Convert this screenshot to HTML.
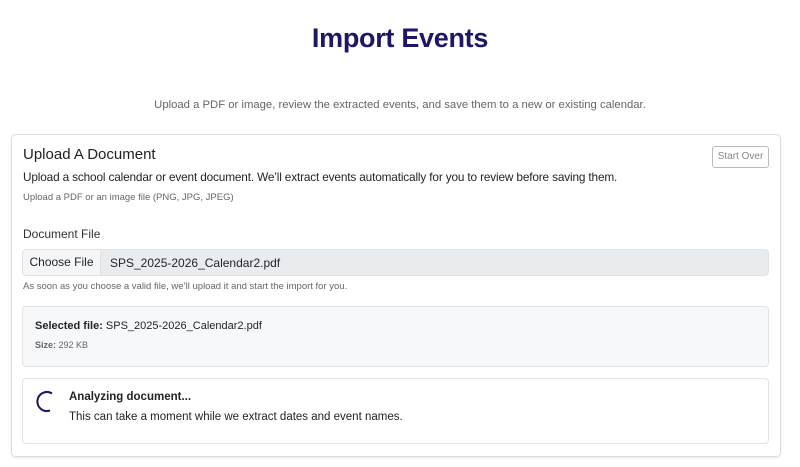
<!DOCTYPE html>
<html><head><style>
*{margin:0;padding:0;box-sizing:border-box}
body{width:800px;height:467px;background:#fff;font-family:"Liberation Sans",Arial,sans-serif;color:#212529;position:relative;overflow:hidden}
.a{position:absolute;white-space:nowrap}
h1{position:absolute;left:0;width:800px;top:23px;text-align:center;font-size:27px;font-weight:bold;color:#1c1766;letter-spacing:-0.3px}
.card{position:absolute;left:11px;top:134px;width:770px;height:323px;border:1px solid #dcdcdc;border-radius:5px;box-shadow:0 1px 2px rgba(0,0,0,.08)}
.btn{position:absolute;left:712px;top:146px;width:57px;height:22px;border:1px solid #bbb;border-radius:3px;font-size:10px;color:#888;text-align:center;line-height:20px}
.file{position:absolute;left:22px;top:249px;width:747px;height:27px;border:1px solid #e0e2e6;border-radius:4px;background:#e9ecef;overflow:hidden}
.choose{position:absolute;left:0;top:0;width:78px;height:25px;background:#f5f6f8;border-right:1px solid #e0e2e6;font-size:12px;line-height:25px;text-align:center}
.box1{position:absolute;left:22px;top:306px;width:747px;height:61px;border:1px solid #e3e3e3;border-radius:4px;background:#f7f8fa}
.box2{position:absolute;left:22px;top:378px;width:747px;height:66px;border:1px solid #e3e3e3;border-radius:4px;background:#fff}
</style></head><body>
<h1>Import Events</h1>
<div class="a" style="left:0;width:800px;text-align:center;top:99px;font-size:11.3px;color:#666">Upload a PDF or image, review the extracted events, and save them to a new or existing calendar.</div>
<div class="card"></div>
<div class="a" style="left:23px;top:146px;font-size:15px;color:#222">Upload A Document</div>
<div class="btn">Start Over</div>
<div class="a" style="left:23px;top:170px;font-size:11.8px;letter-spacing:-0.15px">Upload a school calendar or event document. We’ll extract events automatically for you to review before saving them.</div>
<div class="a" style="left:23px;top:192px;font-size:9.5px;color:#666">Upload a PDF or an image file (PNG, JPG, JPEG)</div>
<div class="a" style="left:23px;top:227px;font-size:12px;color:#333">Document File</div>
<div class="file"><div class="choose">Choose File</div><div class="a" style="left:87px;top:6px;font-size:12px">SPS_2025-2026_Calendar2.pdf</div></div>
<div class="a" style="left:23px;top:281px;font-size:9.5px;color:#666">As soon as you choose a valid file, we’ll upload it and start the import for you.</div>
<div class="box1"></div>
<div class="a" style="left:35px;top:320px;font-size:11px"><b>Selected file:</b> SPS_2025-2026_Calendar2.pdf</div>
<div class="a" style="left:35px;top:340px;font-size:9px;color:#666"><b>Size:</b> 292 KB</div>
<div class="box2"></div>
<svg class="a" style="left:34px;top:390px" width="22" height="24" viewBox="0 0 22 24"><path d="M18 3.5 A9.5 9.5 0 1 0 16 20.5" fill="none" stroke="#1c1766" stroke-width="2"/></svg>
<div class="a" style="left:69px;top:391px;font-size:11.5px;font-weight:bold">Analyzing document...</div>
<div class="a" style="left:69px;top:411px;font-size:11.5px">This can take a moment while we extract dates and event names.</div>
</body></html>
